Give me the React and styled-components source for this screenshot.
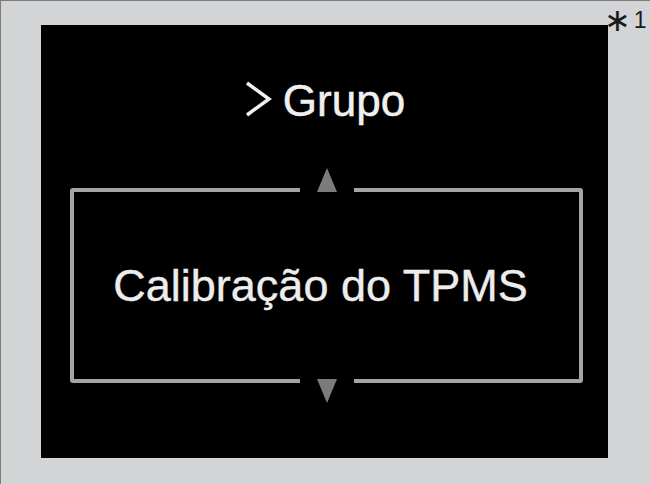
import React from "react";
import styled, { createGlobalStyle } from "styled-components";

const GlobalStyle = createGlobalStyle`
  html, body {
    margin: 0;
    padding: 0;
    background: #d3d4d6;
  }
  body {
    font-family: "Liberation Sans", Arial, sans-serif;
  }
`;

const App = () => {
  return (
    <Frame>
      <GlobalStyle />
      <Note>
        <Star>∗</Star>
        <Digit>1</Digit>
      </Note>
      <Screen>
        <Heading>
          <Chevron viewBox="0 0 28 36">
            <polyline points="3,2 25,18 3,34" />
          </Chevron>
          <span>Grupo</span>
        </Heading>
        <Item>
          <Arrow $up />
          <Label>Calibração do TPMS</Label>
          <Arrow />
        </Item>
      </Screen>
    </Frame>
  );
};

export default App;

const Frame = styled.div`
  position: relative;
  box-sizing: border-box;
  width: 650px;
  height: 484px;
  padding: 24px 0 0 40px;
  background: #d3d4d6;
  border-top: 1px solid #7d7d7d;
  border-left: 1px solid #7d7d7d;
`;

const Note = styled.div`
  position: absolute;
  top: 7px;
  left: 606px;
  display: flex;
  align-items: center;
  gap: 6px;
  height: 24px;
  color: #1a1a1a;
  white-space: nowrap;
`;

const Star = styled.span`
  font-family: "DejaVu Sans", sans-serif;
  font-size: 32px;
  line-height: 24px;
  margin-left: -3px;
  margin-right: -3px;
`;

const Digit = styled.span`
  font-family: "Liberation Sans", Arial, sans-serif;
  font-size: 23px;
  line-height: 24px;
`;

const Screen = styled.div`
  box-sizing: border-box;
  width: 567px;
  height: 433px;
  background: #000;
  padding: 54px 25px 0 29px;
  display: flex;
  flex-direction: column;
`;

const Heading = styled.div`
  display: flex;
  align-items: center;
  justify-content: center;
  gap: 11px;
  height: 44px;
  padding-right: 4px;
  font-size: 44px;
  line-height: 1;
  color: #f0f0f0;
  -webkit-text-stroke: 0.5px #f0f0f0;
`;

const Chevron = styled.svg`
  width: 28px;
  height: 36px;
  margin-top: -5px;
  fill: none;
  stroke: #f0f0f0;
  stroke-width: 3.5;
`;

const Item = styled.div`
  position: relative;
  box-sizing: border-box;
  height: 195px;
  margin-top: 65px;
  padding-right: 12px;
  border: 4px solid #a4a4a4;
  border-radius: 3px;
  display: flex;
  align-items: center;
  justify-content: center;

  &::before,
  &::after {
    content: "";
    position: absolute;
    left: calc(50% - 27px);
    width: 54px;
    height: 6px;
    background: #000;
  }
  &::before {
    top: -5px;
  }
  &::after {
    bottom: -5px;
  }
`;

const Label = styled.div`
  font-size: 45px;
  line-height: 1;
  color: #ededed;
  -webkit-text-stroke: 0.4px #ededed;
`;

const Arrow = styled.div`
  position: absolute;
  z-index: 1;
  left: calc(50% - 10px);
  width: 0;
  height: 0;
  border-left: 10px solid transparent;
  border-right: 10px solid transparent;
  ${({ $up }) =>
    $up
      ? `top: -24px; border-bottom: 24px solid #7b7b7b;`
      : `bottom: -24px; border-top: 24px solid #7b7b7b;`}
`;
